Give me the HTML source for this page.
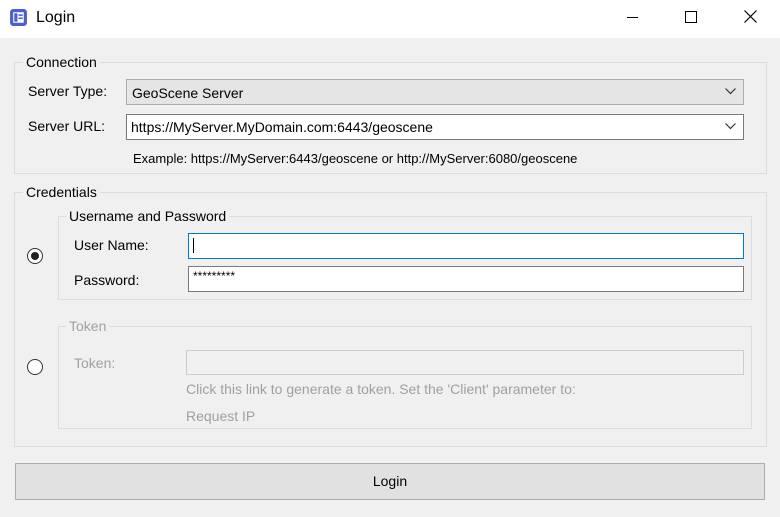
<!DOCTYPE html><html><head><style>
body{margin:0;width:780px;height:517px;background:#f0f0f0;font-family:"Liberation Sans",sans-serif;font-size:14px;color:#000;position:relative;overflow:hidden}
.a{position:absolute}
.title{left:0;top:0;width:780px;height:38px;background:#fff}
.gb{position:absolute;border:1px solid #dcdcdc}
.lg{position:absolute;background:#f0f0f0;padding:0 3px;top:-10px;left:8px;line-height:18px}
.box{position:absolute;background:#fff;border:1px solid #7a7a7a;box-sizing:border-box}
.dis{color:#a0a0a0}
</style></head><body>
<div class="a title"></div>
<svg class="a" style="left:9px;top:8px" width="19" height="19" viewBox="0 0 18 18"><rect x="1" y="1" width="16" height="16" rx="3" fill="#4a5fd0"/><rect x="4" y="4" width="10" height="10" fill="#fff"/><rect x="5" y="5" width="3" height="8" fill="#4a5fd0"/><rect x="9" y="6" width="4" height="1.5" fill="#4a5fd0"/><rect x="9" y="9" width="4" height="1.5" fill="#4a5fd0"/></svg>
<div class="a" style="left:36px;top:9px;font-size:16px">Login</div>
<div class="a" style="left:627px;top:17px;width:11px;height:1px;background:#000"></div>
<div class="a" style="left:685px;top:11px;width:10px;height:10px;border:1px solid #000"></div>
<svg class="a" style="left:744px;top:10px" width="13" height="13"><path d="M0.5 0.5L12.5 12.5M12.5 0.5L0.5 12.5" stroke="#000" stroke-width="1.2"/></svg>

<div class="gb" style="left:14px;top:62px;width:751px;height:110px"><span class="lg">Connection</span></div>
<div class="a" style="left:28px;top:83px">Server Type:</div>
<div class="a" style="left:126px;top:79px;width:618px;height:26px;background:#e5e5e5;border:1px solid #adadad;box-sizing:border-box"></div>
<div class="a" style="left:132px;top:85px">GeoScene Server</div>
<svg class="a" style="left:725px;top:88px" width="11" height="7"><path d="M0.5 0.5L5.5 5.5L10.5 0.5" stroke="#333" fill="none" stroke-width="1.2"/></svg>
<div class="a" style="left:28px;top:118px">Server URL:</div>
<div class="box" style="left:126px;top:114px;width:618px;height:26px"></div>
<div class="a" style="left:131px;top:119px">https://MyServer.MyDomain.com:6443/geoscene</div>
<svg class="a" style="left:725px;top:123px" width="11" height="7"><path d="M0.5 0.5L5.5 5.5L10.5 0.5" stroke="#333" fill="none" stroke-width="1.2"/></svg>
<div class="a" style="left:133px;top:151px;font-size:13px">Example: https://MyServer:6443/geoscene or http://MyServer:6080/geoscene</div>

<div class="gb" style="left:14px;top:192px;width:751px;height:253px"><span class="lg">Credentials</span></div>
<div class="gb" style="left:58px;top:216px;width:692px;height:82px"><span class="lg" style="left:7px">Username and Password</span></div>
<div class="a" style="left:27px;top:248px;width:14px;height:14px;border:1px solid #333;border-radius:50%;background:#fff"></div>
<div class="a" style="left:31px;top:252px;width:8px;height:8px;border-radius:50%;background:#222"></div>
<div class="a" style="left:74px;top:237px">User Name:</div>
<div class="box" style="left:188px;top:233px;width:556px;height:26px;border:1px solid #0078d7"></div>
<div class="a" style="left:193px;top:238px;width:1px;height:15px;background:#000"></div>
<div class="a" style="left:74px;top:272px">Password:</div>
<div class="box" style="left:188px;top:266px;width:556px;height:26px"></div>
<div class="a" style="left:193px;top:269px;font-size:12px">*********</div>

<div class="gb" style="left:58px;top:326px;width:692px;height:101px"><span class="lg dis" style="left:7px">Token</span></div>
<div class="a" style="left:27px;top:359px;width:14px;height:14px;border:1px solid #333;border-radius:50%;background:#fff"></div>
<div class="a dis" style="left:74px;top:355px">Token:</div>
<div class="a" style="left:186px;top:350px;width:558px;height:25px;border:1px solid #ccc;background:#f0f0f0;box-sizing:border-box"></div>
<div class="a dis" style="left:186px;top:381px">Click this link to generate a token. Set the 'Client' parameter to:</div>
<div class="a dis" style="left:186px;top:408px">Request IP</div>

<div class="a" style="left:15px;top:463px;width:750px;height:37px;background:#e1e1e1;border:1px solid #adadad;box-sizing:border-box;text-align:center;line-height:35px">Login</div>
</body></html>
